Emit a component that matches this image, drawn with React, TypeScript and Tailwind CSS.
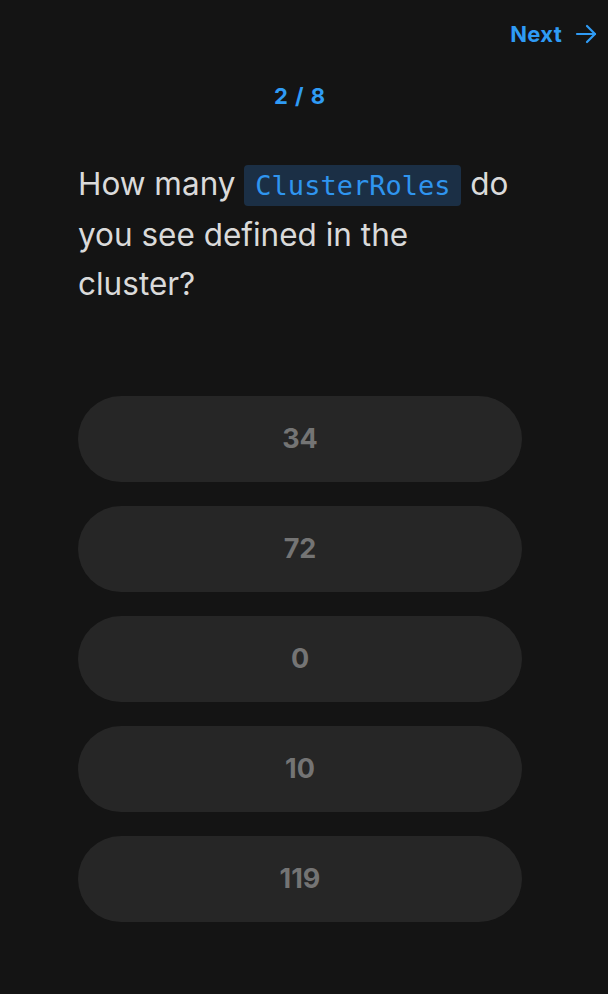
import React, { useState } from "react";

const answers = ["34", "72", "0", "10", "119"];

const App: React.FC = () => {
  const [selected, setSelected] = useState<number | null>(null);

  return (
    <div
      className="min-h-screen w-full bg-[#141414] text-[#d9d9d9]"
      style={{ fontFamily: "Inter, 'Noto Sans', sans-serif" }}
    >
      <div className="flex justify-end pt-[20px] pr-[10px]">
        <button className="flex items-center gap-[12px] text-[22px] font-bold text-[#2f9bf5] leading-[28px] tracking-[0.3px]">
          Next
          <svg width="24" height="24" viewBox="0 0 24 24" fill="none" stroke="currentColor" strokeWidth="2.2" strokeLinecap="round" strokeLinejoin="round">
            <path d="M3 12h18" />
            <path d="M13 4l8 8-8 8" />
          </svg>
        </button>
      </div>

      <div className="ml-[78px] w-[444px]">
        <div className="mt-[35px] text-center text-[22px] font-bold text-[#2f9bf5] leading-[26px] tracking-[1px]">
          2 / 8
        </div>

        <p className="mt-[50px] text-[31.5px] leading-[49px] text-[#dadada]">
          How many{" "}
          <code
            className="rounded-[4px] bg-[#1b2f45] px-[11px] py-[5px] text-[27px] text-[#2f95ef]"
            style={{ fontFamily: "'DejaVu Sans Mono', monospace" }}
          >
            ClusterRoles
          </code>{" "}
          do you see defined in the cluster?
        </p>

        <div className="mt-[88px] flex flex-col gap-[24px]">
          {answers.map((a, i) => (
            <button
              key={a}
              onClick={() => setSelected(i)}
              className={
                selected === i
                  ? "h-[86px] w-full rounded-full bg-[#2f3a48] text-[27px] font-bold text-[#2f9bf5]"
                  : "h-[86px] w-full rounded-full bg-[#262626] text-[27px] font-bold text-[#747474]"
              }
            >
              {a}
            </button>
          ))}
        </div>
      </div>
    </div>
  );
};

export default App;
